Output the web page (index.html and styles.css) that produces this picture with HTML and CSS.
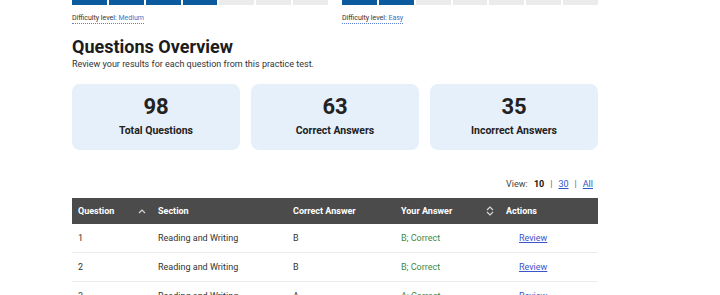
FILE: index.html
```html
<!DOCTYPE html>
<html>
<head>
<meta charset="utf-8">
<link rel="stylesheet" href="styles.css">
</head>
<body>
<div class="page">
  <div class="difficulty">
    <div class="diff-group">
      <div class="bars">
        <span class="bar on"></span><span class="bar on"></span><span class="bar on"></span><span class="bar on"></span><span class="bar"></span><span class="bar"></span><span class="bar"></span>
      </div>
      <span class="diff-label">Difficulty level: <span class="diff-val">Medium</span></span>
    </div>
    <div class="diff-group">
      <div class="bars">
        <span class="bar on"></span><span class="bar on"></span><span class="bar"></span><span class="bar"></span><span class="bar"></span><span class="bar"></span><span class="bar"></span>
      </div>
      <span class="diff-label">Difficulty level: <span class="diff-val">Easy</span></span>
    </div>
  </div>

  <h2 class="title">Questions Overview</h2>
  <p class="subtitle">Review your results for each question from this practice test.</p>

  <div class="cards">
    <div class="card"><div class="num">98</div><div class="lbl">Total Questions</div></div>
    <div class="card"><div class="num">63</div><div class="lbl">Correct Answers</div></div>
    <div class="card"><div class="num">35</div><div class="lbl">Incorrect Answers</div></div>
  </div>

  <div class="view">View: <b>10</b><span class="sep">|</span><a href="#">30</a><span class="sep">|</span><a href="#">All</a></div>

  <table class="qtable">
    <colgroup><col class="c1"><col class="c2"><col class="c3"><col class="c4"><col class="c5"></colgroup>
    <thead>
      <tr>
        <th><div class="th-flex">Question<svg class="ico" width="8" height="6" viewBox="0 0 8 6"><path d="M1 5 L4 2 L7 5" fill="none" stroke="#d8d8d8" stroke-width="1.2"/></svg></div></th>
        <th>Section</th>
        <th>Correct Answer</th>
        <th><div class="th-flex">Your Answer<svg class="ico" width="8" height="10" viewBox="0 0 8 10"><path d="M1 4 L4 1 L7 4 M1 6 L4 9 L7 6" fill="none" stroke="#d8d8d8" stroke-width="1.2"/></svg></div></th>
        <th>Actions</th>
      </tr>
    </thead>
    <tbody>
      <tr><td>1</td><td>Reading and Writing</td><td>B</td><td class="ok">B; Correct</td><td class="act"><a href="#">Review</a></td></tr>
      <tr><td>2</td><td>Reading and Writing</td><td>B</td><td class="ok">B; Correct</td><td class="act"><a href="#">Review</a></td></tr>
      <tr><td>3</td><td>Reading and Writing</td><td>A</td><td class="ok">A; Correct</td><td class="act"><a href="#">Review</a></td></tr>
    </tbody>
  </table>
</div>
</body>
</html>
```
FILE: styles.css
```css
html, body { margin: 0; padding: 0; background: #fff; }
body { font-family: Roboto, "Liberation Sans", sans-serif; color: #222; height: 295px; overflow: hidden; }
.page { width: 526px; margin-left: 72px; }

.difficulty { display: flex; gap: 14px; }
.diff-group { width: 256px; }
.bars { display: flex; gap: 2px; }
.bar { flex: 1; height: 5px; background: #ebebeb; }
.bar.on { background: #0b5b9e; }
.diff-label { display: inline-block; margin-top: 4px; font-size: 7px; color: #333; border-bottom: 1px dotted #5b7fd6; line-height: 10px; padding-bottom: 0; }
.diff-val { color: #2a7ccc; }

.title { margin: 12px 0 0; font-size: 18px; font-weight: 700; line-height: 22px; color: #1c1c1c; }
.subtitle { margin: 0; font-size: 9px; line-height: 12px; color: #333; }

.cards { display: flex; gap: 11px; margin-top: 14px; }
.card { flex: 1; height: 66px; background: #e6f0fa; border-radius: 8px; text-align: center; }
.num { font-size: 22px; font-weight: 700; line-height: 26px; margin-top: 10px; color: #222; }
.lbl { font-size: 10.5px; font-weight: 700; line-height: 14px; margin-top: 4px; color: #222; }

.view { margin-top: 28px; text-align: right; padding-right: 5px; font-size: 9px; line-height: 12px; color: #444; }
.view b { color: #111; margin-left: 4px; }
.view .sep { margin: 0 6px; color: #666; }
.view a { color: #3355cc; text-decoration: underline; }

.qtable { margin-top: 8px; width: 526px; border-collapse: collapse; table-layout: fixed; font-size: 9px; }
.c1 { width: 80px; } .c2 { width: 135px; } .c3 { width: 108px; } .c4 { width: 105px; } .c5 { width: 98px; }
.qtable th { background: #4b4b4b; color: #fff; font-weight: 700; text-align: left; height: 26px; padding: 0 6px; }
.th-flex { display: flex; align-items: center; justify-content: space-between; }
.ico { display: block; }
.qtable td { height: 28px; padding: 0 6px; border-bottom: 1px solid #ececec; color: #333; }
.qtable td.ok { color: #3d8a46; }
.qtable td.act { padding-left: 19px; }
.qtable td.act a { color: #3a55cc; text-decoration: underline; }
```
